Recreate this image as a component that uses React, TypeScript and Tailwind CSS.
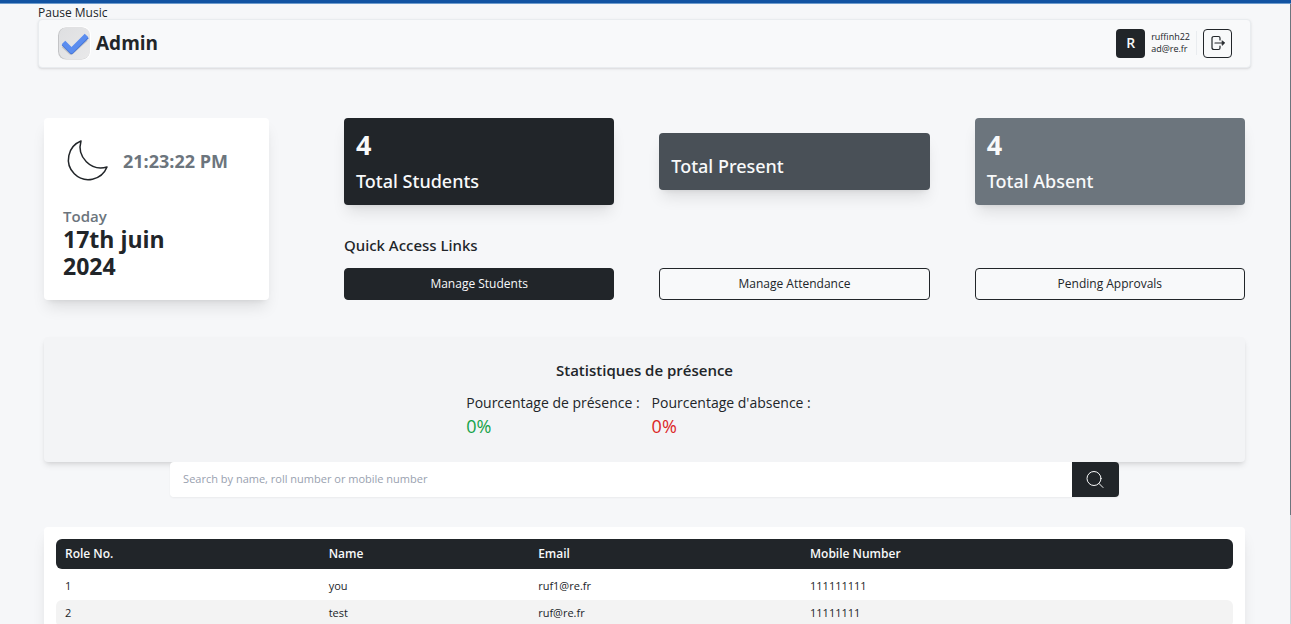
const moonPath = 'M13 2 A20 20 0 1 0 39 28 A21 21 0 0 1 13 2 Z';

const stats = [
  { value: '4', label: 'Total Students', tone: 'bg-[#212529]' },
  { value: '', label: 'Total Present', tone: 'bg-[#495057]' },
  { value: '4', label: 'Total Absent', tone: 'bg-[#6c757d]' },
];

const links = [
  { label: 'Manage Students', tone: 'bg-[#212529] text-[#f8f9fa]' },
  { label: 'Manage Attendance', tone: 'bg-[#f8f9fa] text-[#212529]' },
  { label: 'Pending Approvals', tone: 'bg-[#f8f9fa] text-[#212529]' },
];

const students = [
  { role: '1', name: 'you', email: 'ruf1@re.fr', mobile: '111111111' },
  { role: '2', name: 'test', email: 'ruf@re.fr', mobile: '11111111' },
];

function Logo() {
  return (
    <svg className="size-8 shrink-0 overflow-visible" viewBox="0 0 32 32" aria-hidden="true">
      <defs>
        <linearGradient id="tile" x1="0" y1="0" x2="1" y2="1">
          <stop offset="0" stopColor="#dedfe1" />
          <stop offset="1" stopColor="#e9e9ea" />
        </linearGradient>
      </defs>
      <rect x="0.5" y="-0.5" width="32.5" height="33.5" rx="8.5" fill="#fff" />
      <rect x="0" y="0.5" width="31.5" height="32" rx="8" fill="#c3c4c6" />
      <rect x="1" y="0.5" width="31" height="31.5" rx="7.5" fill="url(#tile)" />
      <path d="M5.5 18.5 L13 25.5 L28 12" fill="none" stroke="#9b9da3" strokeOpacity="0.5" strokeWidth="5" strokeLinejoin="round" />
      <path d="M5.5 16.5 L13.5 24.5 L29 9.5" fill="none" stroke="#4274d8" strokeWidth="5" strokeLinejoin="round" />
      <path d="M5.5 15.5 L13.5 23.5 L28.5 8.5" fill="none" stroke="#5b8def" strokeWidth="5" strokeLinejoin="round" />
    </svg>
  );
}

function Header() {
  return (
    <header className="flex h-[49px] items-center justify-between rounded border border-[#e9ecef] bg-[#f8f9fa] pr-[18px] pb-px pl-[19px] shadow">
      <div className="flex items-center gap-[6px]">
        <Logo />
        <h1 className="text-[19px] font-bold">Admin</h1>
      </div>
      <div className="flex items-center gap-[6px]">
        <span className="flex size-[29px] items-center justify-center rounded bg-[#212529] text-sm font-semibold text-[#f8f9fa]">R</span>
        <div className="border-r border-[#e9ecef] pr-[6px] text-[9px] leading-3">
          <p>ruffinh22</p>
          <p>ad@re.fr</p>
        </div>
        <button type="button" aria-label="Log out" className="flex size-[29px] items-center justify-center rounded border border-[#212529]">
          <svg className="size-4" viewBox="0 0 16 16" fill="none" stroke="currentColor" strokeLinecap="round" strokeLinejoin="round" aria-hidden="true">
            <path strokeWidth="1.2" d="M10 5 V3 Q10 1.5 8.5 1.5 H4 Q2 1.5 2 3.5 V12.5 Q2 14.5 4 14.5 H8.5 Q10 14.5 10 13 V11 M5 8 H14" />
            <path d="M12.5 6 L14.5 8 L12.5 10 Z" fill="currentColor" />
          </svg>
        </button>
      </div>
    </header>
  );
}

function ClockCard() {
  return (
    <section className="flex w-[225px] shrink-0 flex-col justify-between rounded bg-white px-[19px] pt-[18px] pb-5 shadow-lg">
      <div className="flex items-center gap-[11px]">
        <svg className="size-[49px]" viewBox="-5 -3 49 49" fill="none" stroke="#212529" strokeWidth="1.5" strokeLinejoin="round" aria-hidden="true">
          <path d={moonPath} />
        </svg>
        <p className="whitespace-nowrap text-lg font-bold text-[#6c757d]">21:23:22 PM</p>
      </div>
      <div>
        <p className="text-[15px] leading-5 font-semibold text-[#6c757d]">Today</p>
        <p className="w-[120px] text-[23px] leading-[27px] font-bold">17th juin 2024</p>
      </div>
    </section>
  );
}

function Overview() {
  return (
    <section className="flex min-w-0 flex-1 flex-col">
      <div className="grid grid-cols-3 items-center gap-[45px]">
        {stats.map((s) => (
          <div key={s.label} className={`rounded p-3 text-[#f8f9fa] shadow-lg ${s.tone}`}>
            {s.value && <p className="text-[27px] leading-[30px] font-bold">{s.value}</p>}
            <p className="pt-[9px] font-['Noto_Sans',sans-serif] text-lg leading-6 font-medium">{s.label}</p>
          </div>
        ))}
      </div>
      <h2 className="mt-[30px] font-['Noto_Sans',sans-serif] text-[15px] leading-[21px] font-medium">Quick Access Links</h2>
      <div className="mt-3 grid grid-cols-3 gap-[45px]">
        {links.map((l) => (
          <button key={l.label} type="button" className={`h-8 rounded border border-[#212529] text-xs ${l.tone}`}>
            {l.label}
          </button>
        ))}
      </div>
    </section>
  );
}

function Attendance() {
  return (
    <section className="mt-[37px] rounded bg-gray-100 px-6 pt-[23px] pb-[25px] text-center shadow-md">
      <h2 className="text-[15px] leading-[21px] font-semibold">Statistiques de présence</h2>
      <div className="mt-[10px] flex justify-center text-left">
        <div className="mr-3">
          <p className="text-sm leading-6">Pourcentage de présence :</p>
          <p className="text-lg leading-[22px] text-[#16a34a]">0%</p>
        </div>
        <div className="mr-3">
          <p className="text-sm leading-6">Pourcentage d'absence :</p>
          <p className="text-lg leading-[22px] text-[#dc2626]">0%</p>
        </div>
      </div>
    </section>
  );
}

function Search() {
  return (
    <form className="relative mx-auto flex h-[35px] w-[79%] rounded shadow-xs" onSubmit={(e) => e.preventDefault()}>
      <input
        type="search"
        aria-label="Search students"
        placeholder="Search by name, roll number or mobile number"
        className="min-w-0 flex-1 rounded-l bg-white px-[13px] text-[11px] outline-none placeholder:text-gray-400"
      />
      <button type="submit" aria-label="Search" className="flex w-[47px] items-center justify-center rounded-r bg-[#212529] text-[#f8f9fa]">
        <svg className="size-[18px]" viewBox="0 0 18 18" fill="none" stroke="currentColor" strokeLinecap="round" aria-hidden="true">
          <circle cx="8" cy="7.5" r="7" />
          <path d="M13 12.5 L17 16.5" />
        </svg>
      </button>
    </form>
  );
}

function Students() {
  return (
    <section className="mt-[30px] rounded bg-white p-3 shadow-lg">
      <table className="w-full table-fixed border-separate border-spacing-0 text-left">
        <colgroup>
          <col className="w-[22.4%]" />
          <col className="w-[17.8%]" />
          <col className="w-[23.1%]" />
          <col />
        </colgroup>
        <thead>
          <tr className="h-[30px] text-xs text-[#f8f9fa]">
            <th className="rounded-l-md bg-[#212529] px-[9px] font-semibold">Role No.</th>
            <th className="bg-[#212529] px-[9px] font-semibold">Name</th>
            <th className="bg-[#212529] px-[9px] font-semibold">Email</th>
            <th className="rounded-r-md bg-[#212529] px-[9px] font-semibold">Mobile Number</th>
          </tr>
        </thead>
        <tbody className="text-[11px]">
          {students.map((s) => (
            <tr key={s.role} className="group">
              <td className="h-[27px] rounded-l-md px-[9px] group-first:h-[31px] group-first:pt-1 group-even:bg-[#f3f3f3]">{s.role}</td>
              <td className="px-[9px] group-first:pt-1 group-even:bg-[#f3f3f3]">{s.name}</td>
              <td className="px-[9px] group-first:pt-1 group-even:bg-[#f3f3f3]">{s.email}</td>
              <td className="rounded-r-md px-[9px] group-first:pt-1 group-even:bg-[#f3f3f3]">{s.mobile}</td>
            </tr>
          ))}
        </tbody>
      </table>
    </section>
  );
}

export default function App() {
  return (
    <div className="flex h-screen flex-col overflow-hidden bg-[#f6f7f9] font-['Open_Sans','Noto_Sans',sans-serif] text-[#212529]">
      <div className="h-1 shrink-0 border-b border-[#6d9bcd] bg-[#1253a2]" />
      <div className="flex min-h-0 flex-1">
        <div className="min-w-0 flex-1 overflow-hidden pr-[39px] pl-[38px]">
          <button type="button" className="block h-[15px] text-xs leading-[17px]">Pause Music</button>
          <Header />
          <main className="px-[6px] pt-[50px]">
            <div className="flex gap-[75px]">
              <ClockCard />
              <Overview />
            </div>
            <Attendance />
            <Search />
            <Students />
          </main>
        </div>
        <div className="w-px bg-[#ced4da]" aria-hidden="true">
          <div className="h-[82.4%] bg-[#6c757d]" />
        </div>
      </div>
    </div>
  );
}
